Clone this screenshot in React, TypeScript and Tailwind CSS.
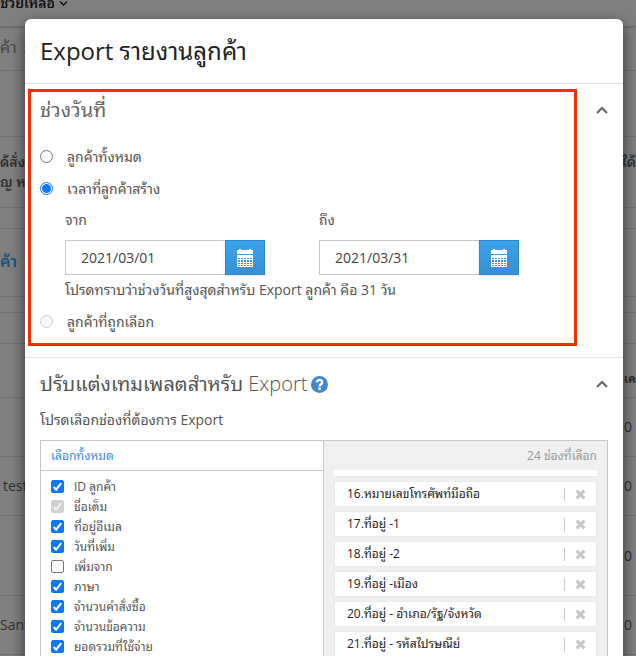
import React, { useState } from 'react';
import clsx from 'clsx';

const FONT = "font-['Open_Sans','Noto_Sans_Thai_Looped','Thonburi','Loma','Garuda','Waree','Noto_Sans',sans-serif]";

const fields = [
  { label: 'ID ลูกค้า', checked: true },
  { label: 'ชื่อเต็ม', checked: true, disabled: true },
  { label: 'ที่อยู่อีเมล', checked: true },
  { label: 'วันที่เพิ่ม', checked: true },
  { label: 'เพิ่มจาก', checked: false },
  { label: 'ภาษา', checked: true },
  { label: 'จำนวนคำสั่งซื้อ', checked: true },
  { label: 'จำนวนข้อความ', checked: true },
  { label: 'ยอดรวมที่ใช้จ่าย', checked: true },
];

const selected = [
  '16.หมายเลขโทรศัพท์มือถือ',
  '17.ที่อยู่ -1',
  '18.ที่อยู่ -2',
  '19.ที่อยู่ -เมือง',
  '20.ที่อยู่ - อำเภอ/รัฐ/จังหวัด',
  '21.ที่อยู่ - รหัสไปรษณีย์',
];

function CalendarIcon() {
  return (
    <svg width="18" height="18" viewBox="0 0 18 18" fill="#fff" aria-hidden="true">
      <path d="M3 0h2v1h8V0h2v1h2v4H1V1h2z" />
      <path fillRule="evenodd" d="M1 6h16v12H1zM2 9v1h2V9zM5 9v1h2V9zM8 9v1h2V9zM11 9v1h2V9zM14 9v1h2V9zM2 11v2h2v-2zM5 11v2h2v-2zM8 11v2h2v-2zM11 11v2h2v-2zM14 11v2h2v-2zM2 14v1h2v-1zM5 14v1h2v-1zM8 14v1h2v-1zM11 14v1h2v-1zM14 14v1h2v-1zM2 16v1h2v-1zM5 16v1h2v-1zM8 16v1h2v-1zM11 16v1h2v-1zM14 16v1h2v-1z" />
    </svg>
  );
}

function CollapseButton({ label }: { label: string }) {
  return (
    <button aria-label={label} className="flex h-6 w-4 items-center justify-center">
      <svg width="12" height="8" viewBox="0 0 12 8" fill="none" stroke="#666" strokeWidth="2">
        <path d="M1 7l5-5 5 5" />
      </svg>
    </button>
  );
}

interface RadioRowProps {
  label: string;
  value: string;
  current: string;
  disabled?: boolean;
  onSelect: (value: string) => void;
}

function RadioRow({ label, value, current, disabled, onSelect }: RadioRowProps) {
  const checked = current === value;
  return (
    <label className="flex h-8 items-center gap-3.5">
      <input
        type="radio"
        name="range"
        checked={checked}
        disabled={disabled}
        onChange={() => onSelect(value)}
        className={clsx(
          'size-[13px] appearance-none rounded-full border',
          disabled ? 'border-[#d0d0d0] bg-[#f8f8f8]' : 'bg-white',
          checked && 'border-[#0b78f6] bg-[radial-gradient(circle,#0b78f6_4px,#fff_5px)]',
          !checked && !disabled && 'border-[#767676]'
        )}
      />
      <span className="pt-0.5">{label}</span>
    </label>
  );
}

function DateField({ id, label, value }: { id: string; label: string; value: string }) {
  const [date, setDate] = useState(value);
  return (
    <div className="w-[254px]">
      <label htmlFor={id} className="flex h-9 items-center pb-1">{label}</label>
      <div className="flex">
        <input
          id={id}
          type="text"
          value={date}
          onChange={(e) => setDate(e.target.value)}
          className="h-[35px] w-40 border border-r-0 border-[#c8c8c8] px-[15px] text-[#444]"
        />
        <button
          aria-label="calendar"
          className="flex h-[35px] w-10 items-center justify-center border border-[#2f86c8] bg-linear-to-b from-[#3ca3ee] to-[#3590d4] shadow-sm"
        >
          <CalendarIcon />
        </button>
      </div>
    </div>
  );
}

function FieldCheckbox({ label, checked: initial, disabled }: { label: string; checked: boolean; disabled?: boolean }) {
  const [checked, setChecked] = useState(initial);
  return (
    <label className="flex h-5 items-center gap-2.5">
      <span className="relative flex">
        <input
          type="checkbox"
          checked={checked}
          disabled={disabled}
          onChange={(e) => setChecked(e.target.checked)}
          className={clsx(
            'size-[13px] appearance-none rounded-xs border',
            !checked && 'border-[#767676] bg-white',
            checked && disabled && 'border-[#d1d1d1] bg-[#d1d1d1]',
            checked && !disabled && 'border-[#0b78f6] bg-[#0b78f6]'
          )}
        />
        {checked && (
          <svg className="pointer-events-none absolute inset-0" width="13" height="13" viewBox="0 0 13 13" fill="none" stroke={disabled ? '#f1f1f1' : '#fff'} strokeWidth="2">
            <path d="M2.7 7l2.4 2.6L10.2 3.2" />
          </svg>
        )}
      </span>
      <span className="pt-0.5">{label}</span>
    </label>
  );
}

function SelectedRow({ label }: { label: string }) {
  return (
    <li className="flex h-[26px] shrink-0 items-center justify-between border border-[#eaeaea] bg-white pr-2.5 pl-3">
      <span>{label}</span>
      <span className="flex items-center gap-2.5">
        <span className="h-[13px] w-px bg-[#c8c8c8]" />
        <button aria-label="remove">
          <svg width="11" height="11" viewBox="0 0 11 11" stroke="#c8c8c8" strokeWidth="3">
            <path d="M1.6 1.6l7.8 7.8M9.4 1.6L1.6 9.4" />
          </svg>
        </button>
      </span>
    </li>
  );
}

function PageBehind() {
  return (
    <div className="h-full bg-[#808080] text-sm text-[#303030]">
      <div className="h-[27px] border-b border-[#6c6c6c] text-[#111] shadow">
        <div className="flex h-1.5 w-[68px] items-center justify-end gap-1 font-semibold">
          <span className="whitespace-nowrap">ช่วยเหลือ</span>
          <svg className="shrink-0" width="9" height="7" viewBox="0 0 9 7" fill="none" stroke="#111" strokeWidth="1.4"><path d="M1 1.5l3.5 3.5L8 1.5" /></svg>
        </div>
      </div>
      <div className="flex h-11 items-center gap-1.5 border-b border-[#727272] text-base text-[#484848]">
        <span className="pb-1">ค้า</span>
        <svg width="6" height="10" viewBox="0 0 6 10" fill="none" stroke="#5c5c5c" strokeWidth="1.2"><path d="M1 1l4 4-4 4" /></svg>
      </div>
      <div className="h-[66px] border-b border-[#727272]" />
      <div className="flex h-[71px] items-center justify-between border-b border-[#727272] font-semibold leading-5">
        <span>ด้สั่งซื้อ<br />ญ หาก</span>
        <span className="pb-5">ได้</span>
      </div>
      <div className="h-[21px] border-b border-[#727272]" />
      <div className="flex h-[68px] items-center border-b border-[#727272] text-base font-semibold text-[#1a517d]">
        <span className="pb-1">ค้า</span>
      </div>
      <div className="h-4 border-b border-[#727272]" />
      <div className="h-[31px] border-b border-[#727272]" />
      <div className="flex h-[54px] items-end justify-end border-b border-[#727272] pb-2.5 text-xs font-bold">เค</div>
      <div className="flex h-[59px] items-center justify-end border-b border-[#727272] pr-1">0</div>
      <div className="flex h-[59px] items-center justify-between border-b border-[#727272] pr-1 pl-[3px]">
        <span>test</span>
        <span>0</span>
      </div>
      <div className="flex h-20 items-center justify-end border-b border-[#727272] pr-1">0</div>
      <div className="flex h-[59px] items-center justify-between border-b border-[#727272] pr-1">
        <span>Santi</span>
        <span>0</span>
      </div>
    </div>
  );
}

export default function App() {
  const [range, setRange] = useState('created');

  return (
    <div className={clsx('relative h-screen overflow-hidden', FONT)}>
      <PageBehind />

      <div className="absolute inset-0 overflow-hidden pt-[19px] pr-[13px] pl-[25px]">
        <div role="dialog" aria-labelledby="title" className="rounded-t-md bg-white text-sm text-[#555] shadow-[0_5px_15px_rgba(0,0,0,0.6)]">
          <header className="flex h-[65px] items-center border-b border-[#e2e2e2] px-[15px]">
            <h1 id="title" className="text-2xl text-[#222]">Export รายงานลูกค้า</h1>
          </header>

          <section className="flex border-b border-[#e2e2e2] pt-[5px] pb-[11px] pl-[3px]">
            {/* highlighted date range */}
            <div className="h-[257px] min-w-0 grow border-3 border-[#ff2a00] pt-0.5 pl-[9px]">
              <h2 className="flex h-8 items-center text-xl text-[#666]">ช่วงวันที่</h2>
              <div className="pt-[14px]">
                <RadioRow label="ลูกค้าทั้งหมด" value="all" current={range} onSelect={setRange} />
                <RadioRow label="เวลาที่ลูกค้าสร้าง" value="created" current={range} onSelect={setRange} />
                <div className="pl-[25px]">
                  <div className="flex">
                    <DateField id="from" label="จาก" value="2021/03/01" />
                    <DateField id="to" label="ถึง" value="2021/03/31" />
                  </div>
                  <p className="flex h-[30px] items-center">โปรดทราบว่าช่วงวันที่สูงสุดสำหรับ Export ลูกค้า คือ 31 วัน</p>
                </div>
                <RadioRow label="ลูกค้าที่ถูกเลือก" value="selected" current={range} disabled onSelect={setRange} />
              </div>
            </div>
            <div className="pt-[9px] pr-[13px] pl-[17px]">
              <CollapseButton label="collapse date range" />
            </div>
          </section>

          <section className="px-[15px] pt-2">
            <div className="flex h-9 items-center justify-between">
              <h2 className="flex items-center gap-1 text-xl font-light text-[#555]">
                <span>
                  <span className="font-normal">ปรับแต่งเทมเพลตสำหรับ</span> Export
                </span>
                <svg width="17" height="17" viewBox="0 0 17 17" aria-label="help">
                  <circle cx="8.5" cy="8.5" r="8.5" fill="#3d8bcd" />
                  <path d="M5.9 6.4c.3-3.3 5.4-3.2 5.3 0 0 1.9-2.6 1.9-2.6 4" fill="none" stroke="#fff" strokeWidth="2.4" />
                  <path d="M7.3 11.5h2.5v2.3H7.3z" fill="#fff" />
                </svg>
              </h2>
              <div className="-mr-[2px]">
                <CollapseButton label="collapse template" />
              </div>
            </div>
            <p className="flex h-[38px] items-center pb-0.5">โปรดเลือกช่องที่ต้องการ Export</p>

            <div className="grid h-[280px] grid-cols-2 border border-[#c8c8c8] text-xs">
              <div className="border-r border-[#c8c8c8]">
                <div className="flex h-[30px] items-center border-b border-[#c8c8c8] px-2.5">
                  <button className="text-[#2f8df0]">เลือกทั้งหมด</button>
                </div>
                <div className="px-2.5 pt-[5px]">
                  {fields.map((f) => (
                    <FieldCheckbox key={f.label} {...f} />
                  ))}
                </div>
              </div>
              <div className="flex flex-col overflow-hidden bg-[#f0f0f0] px-2.5">
                <div className="flex h-[29px] shrink-0 items-center justify-end text-[#999]">24 ช่องที่เลือก</div>
                <ul className="flex flex-col justify-start gap-1 overflow-hidden text-[#222]">
                  <li className="h-[7px] shrink-0 border-b border-[#eaeaea] bg-white" />
                  {selected.map((s) => (
                    <SelectedRow key={s} label={s} />
                  ))}
                </ul>
              </div>
            </div>
          </section>
        </div>
      </div>
    </div>
  );
}
